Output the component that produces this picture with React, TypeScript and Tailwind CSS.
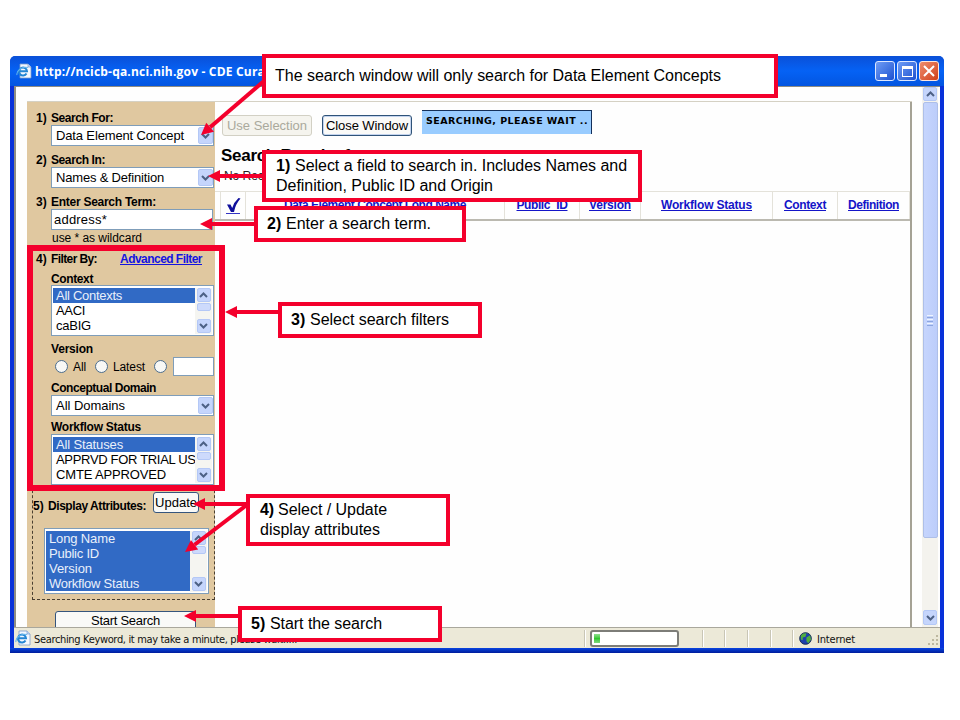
import { useLayoutEffect, useRef, useState, type ReactNode } from 'react';

const ARIAL = "font-['Liberation_Sans',Arial,sans-serif]";
const TAHOMA = "font-['DejaVu_Sans_Condensed','DejaVu_Sans',sans-serif]";

/** Single-line text whose tracking is adjusted so that it spans w pixels. */
function T({ w, children, className = '' }: { w: number; children: string; className?: string }) {
  const ref = useRef<HTMLSpanElement>(null);
  const [sp, setSp] = useState(0);
  useLayoutEffect(() => {
    const natural = ref.current!.getBoundingClientRect().width;
    setSp((w - natural) / children.length);
  }, []);
  return (
    <span ref={ref} className={`inline-block whitespace-pre ${className}`} style={{ letterSpacing: sp }}>
      {children}
    </span>
  );
}

function Chevron({ up = false }: { up?: boolean }) {
  return (
    <svg viewBox="0 0 9 6" className="h-[6px] w-[9px]">
      <path d={up ? 'M1 5 L4.5 1.5 L8 5' : 'M1 1 L4.5 4.5 L8 1'} fill="none" stroke="#4d6185" strokeWidth="2" />
    </svg>
  );
}

function ArrowButton({ up = false, className = '' }: { up?: boolean; className?: string }) {
  return (
    <div className={`flex shrink-0 items-center justify-center rounded-[2px] border border-[#b4c8f6] bg-[#c5d5fc] ${className}`}>
      <Chevron up={up} />
    </div>
  );
}

function Label({ n, w, children, className = 'mt-[6px] h-[15px]' }: { n?: string; w: number; children: string; className?: string }) {
  return (
    <div className={`flex shrink-0 items-center pt-[2px] text-[12px] leading-[13px] font-bold ${className}`}>
      <div className="w-[15px]">{n && <T w={11}>{n}</T>}</div>
      <T w={w}>{children}</T>
    </div>
  );
}

function Select({ w, children }: { w: number; children: string }) {
  return (
    <div className="ml-[15px] flex h-[21px] w-[163px] shrink-0 items-center justify-between border border-[#7f9db9] bg-white pl-[4px] text-[13px]">
      <T w={w} className="pt-px">{children}</T>
      <ArrowButton className="h-[17px] w-[15px]" />
    </div>
  );
}

function ListBox({ items, className, all = false }: { items: [string, number][]; className: string; all?: boolean }) {
  return (
    <div className={`flex shrink-0 overflow-hidden border border-[#7f9db9] bg-white p-px pt-[2px] text-[13px] ${className}`}>
      <div className="min-w-0 flex-1 overflow-hidden">
        {items.map(([t, w], i) => (
          <div
            key={t}
            className={`flex h-[15px] items-center pl-[3px] leading-[15px] ${all || i === 0 ? 'bg-[#316ac5] text-[#e9f0fb]' : 'text-black'}`}
          >
            <T w={w}>{t}</T>
          </div>
        ))}
      </div>
      <div className="flex w-[17px] flex-col items-center bg-[#f5f5f1]">
        <ArrowButton up className="h-[14px] w-[14px]" />
        <div className="mt-px h-[8px] w-[14px] rounded-[2px] border border-[#b4c8f6] bg-[#cddafc]" />
        <div className="flex-1" />
        <ArrowButton className="mb-px h-[14px] w-[14px]" />
      </div>
    </div>
  );
}

function Radio({ className = '' }: { className?: string }) {
  return <span className={`h-[13px] w-[13px] shrink-0 rounded-full border border-[#4c6d8d] bg-[#f8f8f5] ${className}`} />;
}

function Sidebar() {
  return (
    <div className="flex w-[188px] shrink-0 flex-col overflow-hidden bg-[#e0c8a0]">
      <div className="flex shrink-0 flex-col pl-[9px] pt-[8px]">
        <Label n="1)" w={62} className="h-[15px]">Search For:</Label>
        <Select w={128}>Data Element Concept</Select>
        <Label n="2)" w={54}>Search In:</Label>
        <Select w={108}>Names &amp; Definition</Select>
        <Label n="3)" w={105}>Enter Search Term:</Label>
        <div className="ml-[15px] flex h-[21px] w-[162px] shrink-0 items-center border border-[#7f9db9] bg-white pl-[2px] pt-px text-[13px]">
          <T w={53}>address*</T>
        </div>
        <div className="ml-[16px] flex h-[16px] items-center text-[12px] leading-4"><T w={90}>use * as wildcard</T></div>
        <div className="mt-[5px] flex h-[16px] items-center text-[12px] leading-4 font-bold">
          <div className="w-[15px]"><T w={11}>4)</T></div>
          <div className="w-[69px]"><T w={46}>Filter By:</T></div>
          <T w={82} className="text-[#1414e0] underline">Advanced Filter</T>
        </div>
        <Label w={42} className="mt-[4px] h-[14px]">Context</Label>
        <ListBox className="ml-[15px] h-[51px] w-[163px]" items={[['All Contexts', 66], ['AACI', 29], ['caBIG', 35]]} />
        <Label w={42} className="mt-[4px] h-[16px]">Version</Label>
        <div className="flex h-[20px] shrink-0 items-center text-[12px]">
          <Radio className="ml-[19px]" />
          <div className="ml-[5px] w-[22px] pt-px"><T w={13}>All</T></div>
          <Radio />
          <div className="ml-[5px] w-[41px] pt-px"><T w={32}>Latest</T></div>
          <Radio />
          <div className="ml-[6px] h-[19px] w-[41px] border border-[#7f9db9] bg-white" />
        </div>
        <Label w={105} className="mt-[4px] h-[15px]">Conceptual Domain</Label>
        <Select w={69}>All Domains</Select>
        <Label w={90} className="mt-[3px] h-[15px]">Workflow Status</Label>
        <ListBox className="ml-[15px] h-[51px] w-[163px]" items={[['All Statuses', 67], ['APPRVD FOR TRIAL USE', 148], ['CMTE APPROVED', 110]]} />
      </div>
      <div className="ml-[5px] flex h-[115px] w-[183px] shrink-0 flex-col border border-t-0 border-dashed border-[#4a3f30]">
        <div className="mt-[7px] flex h-[21px] shrink-0 text-[12px] font-bold">
          <div className="mt-[7px] w-[15px] leading-[15px]"><T w={11}>5)</T></div>
          <div className="mt-[7px] w-[105px] leading-[15px]"><T w={98}>Display Attributes:</T></div>
          <div className="flex h-[21px] w-[46px] justify-center rounded-[3px] border border-[#35557d] bg-[#f9f9f7] text-[13px] leading-[19px] font-normal">
            <T w={42}>Update</T>
          </div>
        </div>
        <ListBox
          all
          className="ml-[11px] mt-[15px] h-[66px] w-[165px]"
          items={[['Long Name', 66], ['Public ID', 50], ['Version', 43], ['Workflow Status', 90]]}
        />
      </div>
      <div className="ml-[28px] mt-[11px] flex h-[21px] w-[141px] shrink-0 justify-center rounded-[3px] border border-[#35557d] bg-[#f9f9f7] text-[13px] leading-[17px]">
        <T w={69}>Start Search</T>
      </div>
    </div>
  );
}

function HeaderCell({ w, text, textW }: { w: string; text: string; textW: number }) {
  return (
    <div className={`flex shrink-0 items-center justify-center border-r border-[#e4e2da] pb-px ${w}`}>
      <T w={textW} className="text-[#1414c8] underline">{text}</T>
    </div>
  );
}

function Main() {
  return (
    <div className="flex min-w-0 flex-1 flex-col border-r-2 border-[#a5a295] bg-[#fefefe]">
      <div className="flex h-[36px] shrink-0 pl-[7px] pt-[8px] text-[13px]">
        <div className="mt-[5px] flex h-[21px] w-[90px] items-center justify-center rounded-[3px] border border-[#d2d0c4] bg-[#f5f4ee] text-[#aaa99c]">
          <T w={80}>Use Selection</T>
        </div>
        <div className="ml-[10px] mt-[5px] flex h-[21px] w-[90px] items-center justify-center rounded-[3px] border border-[#2f5378] bg-[#fafaf8] shadow-[inset_0_0_0_1px_#c3d3ee]">
          <T w={82}>Close Window</T>
        </div>
        <div className="ml-[10px] flex h-[24px] w-[170px] items-center border-r border-t border-[#14305a] bg-[#99ccff] pb-[2px] pl-[4px] font-['DejaVu_Sans',sans-serif] text-[9.5px] font-bold">
          <T w={162}>SEARCHING, PLEASE WAIT ..</T>
        </div>
      </div>
      <div className="mt-[8px] h-[20px] shrink-0 pl-[6px] text-[17px] leading-5 font-bold"><T w={145}>Search Results for</T></div>
      <div className="mt-[2px] h-[16px] shrink-0 pl-[9px] text-[12px] leading-4 text-[#222]"><T w={100}>No Records Found</T></div>
      <div className="mt-[7px] flex h-[30px] shrink-0 border-b-2 border-t border-b-[#bbb9b0] border-t-[#e4e2da] pl-[5px] text-[12px] font-bold">
        <div className="flex w-[26px] items-center justify-center border-x border-[#e4e2da]">
          <svg viewBox="0 0 16 18" className="h-[18px] w-[16px]">
            <path d="M2 7.5 L5.5 7.5 L7.2 11 Q9 5 13.5 1 L15.5 1.5 Q10.5 7 9 15 L6 15 Z" fill="#10109c" />
            <path d="M1 16.5 H15" stroke="#3434c4" />
          </svg>
        </div>
        <HeaderCell w="w-[259px]" text="Data Element Concept Long Name" textW={182} />
        <HeaderCell w="w-[75px]" text="Public_ID" textW={51} />
        <HeaderCell w="w-[61px]" text="Version" textW={42} />
        <HeaderCell w="w-[132px]" text="Workflow Status" textW={91} />
        <HeaderCell w="w-[65px]" text="Context" textW={42} />
        <HeaderCell w="w-[72px]" text="Definition" textW={51} />
      </div>
    </div>
  );
}

function IeIcon() {
  return (
    <svg viewBox="0 0 16 16" className="h-[16px] w-[16px] shrink-0">
      <path d="M4 1 H12 L15 4 V15 H4 Z" fill="#f4f8ff" stroke="#7b9bcb" strokeWidth=".8" />
      <path d="M12 1 V4 H15" fill="#c9dcf7" stroke="#7b9bcb" strokeWidth=".7" />
      <path d="M10.5 10.5 A4 4 0 1 1 11 8.3 H3.6" fill="none" stroke="#2385d4" strokeWidth="2" />
      <path d="M1 12 C0 8 6 3 12 4.5" fill="none" stroke="#63b4ec" strokeWidth="1.1" />
    </svg>
  );
}

function TitleBar() {
  return (
    <div className="flex h-[30px] shrink-0 items-center rounded-t-[5px] bg-linear-to-b from-[#0a50d8] via-[#0562f5] to-[#0355e0] pl-[6px] pr-[5px]">
      <IeIcon />
      <div className="ml-[3px] flex-1 pt-[2px] font-['Open_Sans','Noto_Sans',sans-serif] text-[12px] font-bold text-white">
        <T w={255}>http://ncicb-qa.nci.nih.gov - CDE Curation</T>
      </div>
      <div className="flex gap-[2px]">
        <div className="flex h-[20px] w-[20px] items-end rounded-[3px] border border-[#dce7ff] bg-linear-to-br from-[#6f9cf5] to-[#1d50d0] pb-[3px] pl-[4px]">
          <span className="h-[3px] w-[7px] bg-white" />
        </div>
        <div className="flex h-[20px] w-[20px] items-center justify-center rounded-[3px] border border-[#dce7ff] bg-linear-to-br from-[#6f9cf5] to-[#1d50d0]">
          <span className="h-[11px] w-[11px] border border-t-[3px] border-white" />
        </div>
        <div className="flex h-[20px] w-[20px] items-center justify-center rounded-[3px] border border-[#ffe6dd] bg-linear-to-br from-[#ee8c6c] to-[#cf3d13]">
          <svg viewBox="0 0 12 12" className="h-[12px] w-[12px]"><path d="M1 1 L11 11 M11 1 L1 11" stroke="#fff" strokeWidth="2" /></svg>
        </div>
      </div>
    </div>
  );
}

function PageScrollbar() {
  return (
    <div className="mr-[2px] flex w-[16px] shrink-0 flex-col items-center bg-[#f4f3ee]">
      <ArrowButton up className="h-[14px] w-[14px]" />
      <div className="mt-px flex h-[436px] w-[15px] shrink-0 flex-col items-center justify-center gap-px rounded-[2px] border border-[#aebfe8] bg-linear-to-r from-[#c6d5fd] to-[#bccdfa]">
        <span className="h-px w-[6px] bg-[#eef4fe]" />
        <span className="h-px w-[6px] bg-[#8ca6e0]" />
        <span className="h-px w-[6px] bg-[#eef4fe]" />
        <span className="h-px w-[6px] bg-[#8ca6e0]" />
        <span className="h-px w-[6px] bg-[#eef4fe]" />
        <span className="h-px w-[6px] bg-[#8ca6e0]" />
      </div>
      <div className="flex-1" />
      <ArrowButton className="mb-[2px] h-[15px] w-[14px]" />
    </div>
  );
}

function Sep({ className }: { className: string }) {
  return <div className={`h-[17px] shrink-0 border-l border-[#c9c6b6] shadow-[inset_1px_0_0_#fff] ${className}`} />;
}

function StatusBar() {
  return (
    <div className={`flex h-[21px] shrink-0 items-center border-t border-[#a9a79c] bg-[#ece9d8] text-[11px] text-[#111] ${TAHOMA}`}>
      <div className="flex w-[570px] shrink-0 items-center gap-[3px] pl-px">
        <IeIcon />
        <T w={263} className="pt-[4px] leading-[14px]">Searching Keyword, it may take a minute, please wait.....</T>
      </div>
      <Sep className="w-[6px]" />
      <div className="h-[17px] w-[89px] shrink-0 rounded-[3px] border-2 border-[#7d7d78] bg-white p-[2px]">
        <div className="h-[9px] w-[6px] bg-linear-to-b from-[#8fe08f] via-[#2fc72f] to-[#7cd87c]" />
      </div>
      <Sep className="ml-[23px] w-[22px]" />
      <Sep className="w-[23px]" />
      <Sep className="w-[23px]" />
      <Sep className="w-[22px]" />
      <Sep className="w-[7px]" />
      <svg viewBox="0 0 14 14" className="h-[13px] w-[13px] shrink-0">
        <circle cx="7" cy="7" r="6.3" fill="#1c3fae" stroke="#16284f" />
        <path d="M2 4 Q4 1 8 1.5 L7 5 L4 6 L4 9 L2 8 Z M8 6 L12 3.5 L13 8 L10 12 L8 10 Z" fill="#4fae3f" />
      </svg>
      <div className="ml-[5px] flex-1 pt-[4px] leading-[14px]"><T w={38}>Internet</T></div>
      <svg viewBox="0 0 12 12" className="mt-[6px] h-[12px] w-[12px] shrink-0" fill="#bdb8a0">
        <path d="M8 0h2v2h-2z M4 4h2v2h-2z M8 4h2v2h-2z M0 8h2v2h-2z M4 8h2v2h-2z M8 8h2v2h-2z" />
      </svg>
    </div>
  );
}

function Callout({ className, children }: { className: string; children: ReactNode }) {
  return (
    <div className={`absolute border-4 border-[#f4002c] bg-white text-[16px] leading-[20px] text-black ${className}`}>{children}</div>
  );
}

function Arrow({ from, to }: { from: [number, number]; to: [number, number] }) {
  const dx = to[0] - from[0];
  const dy = to[1] - from[1];
  const len = Math.hypot(dx, dy);
  const ux = dx / len;
  const uy = dy / len;
  const bx = to[0] - ux * 12;
  const by = to[1] - uy * 12;
  return (
    <g>
      <line x1={from[0]} y1={from[1]} x2={bx} y2={by} strokeWidth="4" />
      <polygon points={`${to[0]},${to[1]} ${bx - uy * 6},${by + ux * 6} ${bx + uy * 6},${by - ux * 6}`} stroke="none" />
    </g>
  );
}

export default function App() {
  return (
    <div className={`relative h-[720px] w-[960px] overflow-hidden bg-white pl-[10px] pt-[56px] text-black ${ARIAL}`}>
      <div className="flex h-[597px] w-[934px] flex-col rounded-t-[6px] bg-[#0831d9]">
        <TitleBar />
        <div className="flex h-[562px] flex-col pl-[4px] pr-[4px]">
          <div className="flex min-h-0 flex-1 border-l-2 border-t border-[#8d8c83] bg-[#fefefe]">
            <div className="ml-[11px] mt-[14px] flex w-[885px] shrink-0 overflow-hidden border-t border-[#d5d1c4]">
              <Sidebar />
              <Main />
            </div>
            <div className="flex-1" />
            <PageScrollbar />
          </div>
          <StatusBar />
        </div>
        <div className="h-[5px] shrink-0 bg-linear-to-b from-[#0a44e0] to-[#001c9c]" />
      </div>

      <div className="absolute left-[27px] top-[245px] h-[246px] w-[198px] border-6 border-[#f4002c]" />
      <svg viewBox="0 0 960 720" className="absolute left-0 top-0 h-[720px] w-[960px]" fill="#f4002c" stroke="#f4002c">
        <Arrow from={[264, 81]} to={[201, 135]} />
        <Arrow from={[264, 176]} to={[208, 176]} />
        <Arrow from={[256, 224]} to={[200, 224]} />
        <Arrow from={[280, 312]} to={[225, 312]} />
        <Arrow from={[248, 504]} to={[193, 504]} />
        <Arrow from={[248, 504]} to={[185, 552]} />
        <Arrow from={[240, 616]} to={[184, 616]} />
      </svg>
      <Callout className="left-[262px] top-[54px] h-[44px] w-[516px] pl-[9px] pt-[8px]">
        <T w={446}>The search window will only search for Data Element Concepts</T>
      </Callout>
      <Callout className="left-[262px] top-[150px] h-[52px] w-[380px] pl-[10px] pt-[2px]">
        <div className="flex h-[20px]"><T w={19} className="font-bold">1) </T><T w={332}>Select a field to search in. Includes Names and</T></div>
        <div className="flex h-[20px]"><T w={217}>Definition, Public ID and Origin</T></div>
      </Callout>
      <Callout className="left-[254px] top-[206px] h-[36px] w-[212px] pl-[9px] pt-[4px]">
        <div className="flex"><T w={19} className="font-bold">2) </T><T w={145}>Enter a search term.</T></div>
      </Callout>
      <Callout className="left-[278px] top-[302px] h-[36px] w-[204px] pl-[9px] pt-[4px]">
        <div className="flex"><T w={19} className="font-bold">3) </T><T w={139}>Select search filters</T></div>
      </Callout>
      <Callout className="left-[246px] top-[494px] h-[52px] w-[204px] pl-[10px] pt-[2px]">
        <div className="flex h-[20px]"><T w={18} className="font-bold">4) </T><T w={109}>Select / Update</T></div>
        <div className="flex h-[20px]"><T w={120}>display attributes</T></div>
      </Callout>
      <Callout className="left-[238px] top-[606px] h-[36px] w-[204px] pl-[9px] pt-[4px]">
        <div className="flex"><T w={19} className="font-bold">5) </T><T w={112}>Start the search</T></div>
      </Callout>
    </div>
  );
}
